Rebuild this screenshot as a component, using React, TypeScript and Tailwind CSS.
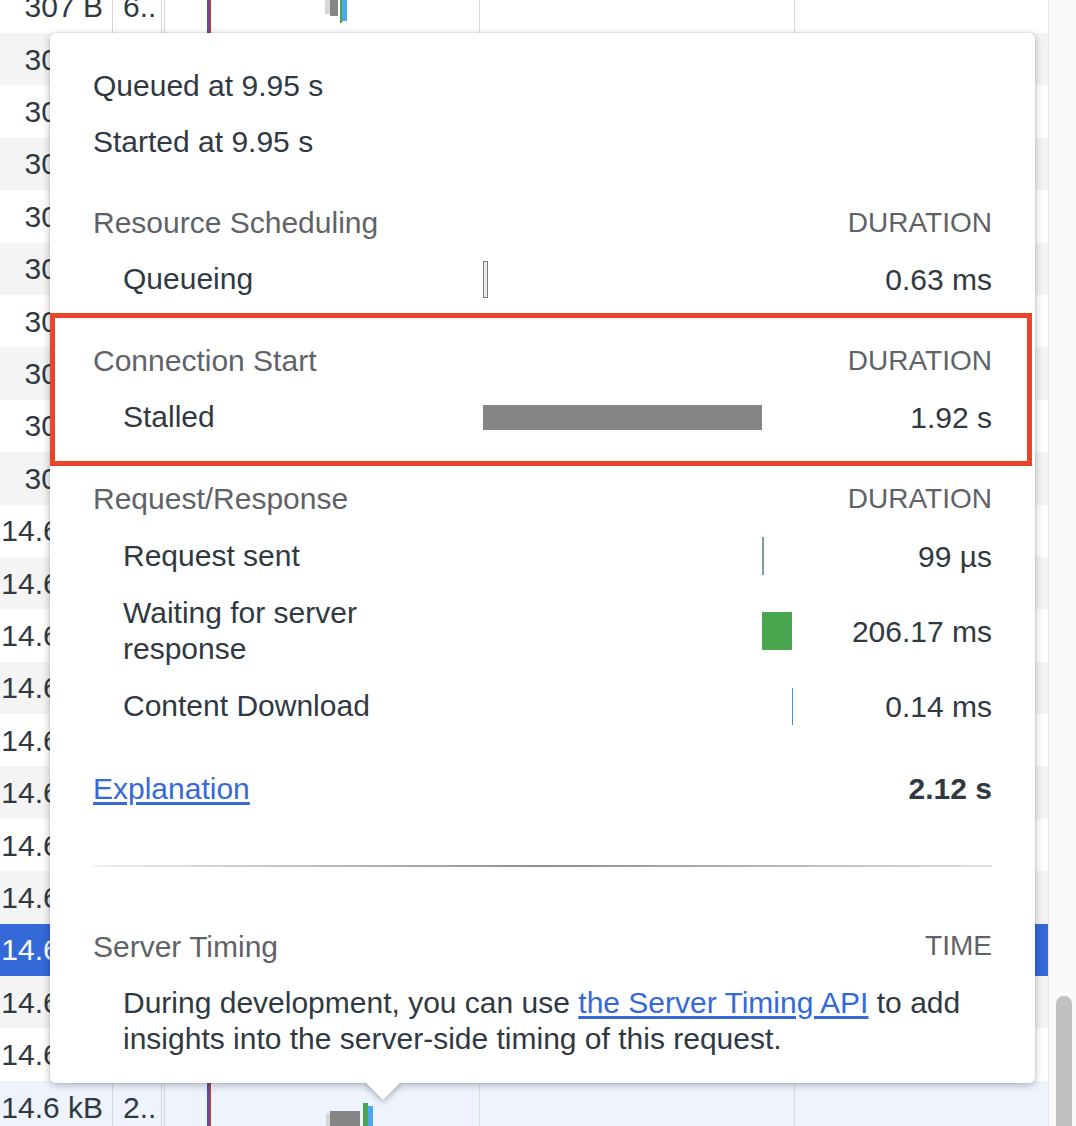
const ROWS = Array.from({ length: 22 }, (_, i) => i);

function rowBg(i: number) {
  if (i === 18) return "bg-[#3469d7] text-white";
  if (i === 21) return "bg-[#eef3fd]";
  if (i % 2 === 1) return "bg-[#f4f4f4]";
  return "bg-white";
}

function TableRow({ i }: { i: number }) {
  const size = i < 10 ? "307 B" : "14.6 kB";
  const time = i < 10 ? "6.." : "2..";
  return (
    <div className={`flex h-[52.4px] ${rowBg(i)}`}>
      <div className="flex w-[113px] shrink-0 items-center justify-end whitespace-nowrap border-r border-[#d6d6d6] pr-[9px]">
        {size}
      </div>
      <div className="flex w-[49px] shrink-0 items-center overflow-hidden whitespace-nowrap border-r border-[#d6d6d6] pl-[10px]">
        {time}
      </div>
      <div className="relative ml-[2px] flex-1 border-l border-[#d6d6d6]">
        {i === 0 && (
          <>
            <div className="absolute left-[160px] top-[8px] h-[25px] w-[5px] bg-[#d6d6d6]" />
            <div className="absolute left-[165px] top-[8px] h-[27px] w-[8px] bg-[#858585]" />
            <div className="absolute left-[175px] top-[8px] h-[34px] w-[2px] bg-[#4aa64f]" />
            <div className="absolute left-[177px] top-[8px] h-[32px] w-[5px] bg-[#4ea6ee]" />
          </>
        )}
        {i === 21 && (
          <>
            <div className="absolute left-[161px] top-[32px] h-[40px] w-[4px] bg-[#d6d6d6]" />
            <div className="absolute left-[165px] top-[30px] h-[40px] w-[30px] bg-[#858585]" />
            <div className="absolute left-[198px] top-[22px] h-[40px] w-[5px] bg-[#4aa64f]" />
            <div className="absolute left-[203px] top-[25px] h-[40px] w-[5px] bg-[#4ea6ee]" />
          </>
        )}
      </div>
    </div>
  );
}

function Header({ title, right }: { title: string; right: string }) {
  return (
    <div className="flex h-[57px] items-center justify-between text-[#5f6368]">
      <span>{title}</span>
      <span className="text-[28px]">{right}</span>
    </div>
  );
}

function TimingRow({
  label,
  value,
  h,
  bar,
}: {
  label: React.ReactNode;
  value: string;
  h: string;
  bar: React.ReactNode;
}) {
  return (
    <div className={`flex items-center ${h}`}>
      <div className="w-[390px] shrink-0 pl-[30px] leading-[36px]">{label}</div>
      <div className="flex h-full w-[310px] shrink-0 items-center">{bar}</div>
      <div className="flex-1 text-right">{value}</div>
    </div>
  );
}

export default function App() {
  return (
    <div className="relative h-[1126px] w-[1076px] overflow-hidden bg-white font-['Liberation_Sans',Arial,sans-serif] text-[30px] text-[#303942]">
      <div className="flex h-full">
        <div className="relative -mt-[19.4px] flex-1">
          {ROWS.map((i) => (
            <TableRow key={i} i={i} />
          ))}
          <div className="absolute bottom-0 left-[207px] top-0 w-[2px] bg-[#2c5bcc]" />
          <div className="absolute bottom-0 left-[209px] top-0 w-[2px] bg-[#c73a2e]" />
          <div className="absolute bottom-0 left-[479px] top-0 w-px bg-[#dcdcdc]" />
          <div className="absolute bottom-0 left-[794px] top-0 w-px bg-[#dcdcdc]" />
        </div>
        <div className="w-[28px] shrink-0 border-l border-[#e4e4e4] bg-[#f9f9f9] pl-[7px] pt-[996px]">
          <div className="h-[200px] w-[16px] rounded-full bg-[#c1c1c1]" />
        </div>
      </div>

      <div className="absolute left-[50px] top-[33px] h-[1050px] w-[985px] rounded-[6px] bg-white shadow-[0_0_0_1px_rgba(0,0,0,0.04),0_2px_9px_rgba(0,0,0,0.28)]">
        <div className="absolute left-[321px] top-[1038px] h-[24px] w-[24px] rotate-45 bg-white shadow-[0_0_0_1px_rgba(0,0,0,0.04),2px_2px_6px_rgba(0,0,0,0.25)]" />
        <div className="relative z-10 h-full rounded-[6px] bg-white px-[43px] pt-[24px]">
          <div className="flex h-[56px] items-center">Queued at 9.95 s</div>
          <div className="flex h-[56px] items-center">Started at 9.95 s</div>

          <div className="mt-[25px]">
            <Header title="Resource Scheduling" right="DURATION" />
          </div>
          <TimingRow
            label="Queueing"
            value="0.63 ms"
            h="h-[56px]"
            bar={<div className="h-[37px] w-[5px] border border-[#7a7a7a] bg-[#ececec]" />}
          />

          <div className="-ml-[43px] -mr-[40px] mt-[6px] border-[5px] border-[#ea4529] pb-[16px] pl-[38px] pr-[35px] pt-[14px]">
            <Header title="Connection Start" right="DURATION" />
            <TimingRow
              label="Stalled"
              value="1.92 s"
              h="h-[56px]"
              bar={<div className="h-[25px] w-[279px] bg-[#858585]" />}
            />
          </div>

          <div className="mt-[4px]">
            <Header title="Request/Response" right="DURATION" />
          </div>
          <TimingRow
            label="Request sent"
            value="99 µs"
            h="h-[58px]"
            bar={<div className="ml-[279px] h-[38px] w-[2px] bg-[#7e9c9e]" />}
          />
          <TimingRow
            label={<div className="w-[300px]">Waiting for server response</div>}
            value="206.17 ms"
            h="h-[92px]"
            bar={<div className="ml-[279px] h-[38px] w-[30px] bg-[#4aa54f]" />}
          />
          <TimingRow
            label="Content Download"
            value="0.14 ms"
            h="h-[58px]"
            bar={<div className="ml-[309px] h-[37px] w-[3px] bg-[#4a90df]" />}
          />

          <div className="mt-[25px] flex h-[56px] items-center justify-between">
            <a href="#" className="text-[#3469d7] underline underline-offset-[3px]">
              Explanation
            </a>
            <span className="font-bold">2.12 s</span>
          </div>

          <div className="mt-[49px] h-[2px] bg-gradient-to-r from-[#f0f0f0] via-[#8d8d8d] to-[#e0e0e0]" />

          <div className="mt-[51px]">
            <div className="flex h-[56px] items-center justify-between text-[#5f6368]">
              <span>Server Timing</span>
              <span className="text-[28px]">TIME</span>
            </div>
          </div>
          <p className="mt-[11px] pl-[30px] leading-[36px]">
            During development, you can use{" "}
            <a href="#" className="text-[#3469d7] underline underline-offset-[3px]">
              the Server Timing API
            </a>{" "}
            to add insights into the server-side timing of this request.
          </p>
        </div>
      </div>
    </div>
  );
}
